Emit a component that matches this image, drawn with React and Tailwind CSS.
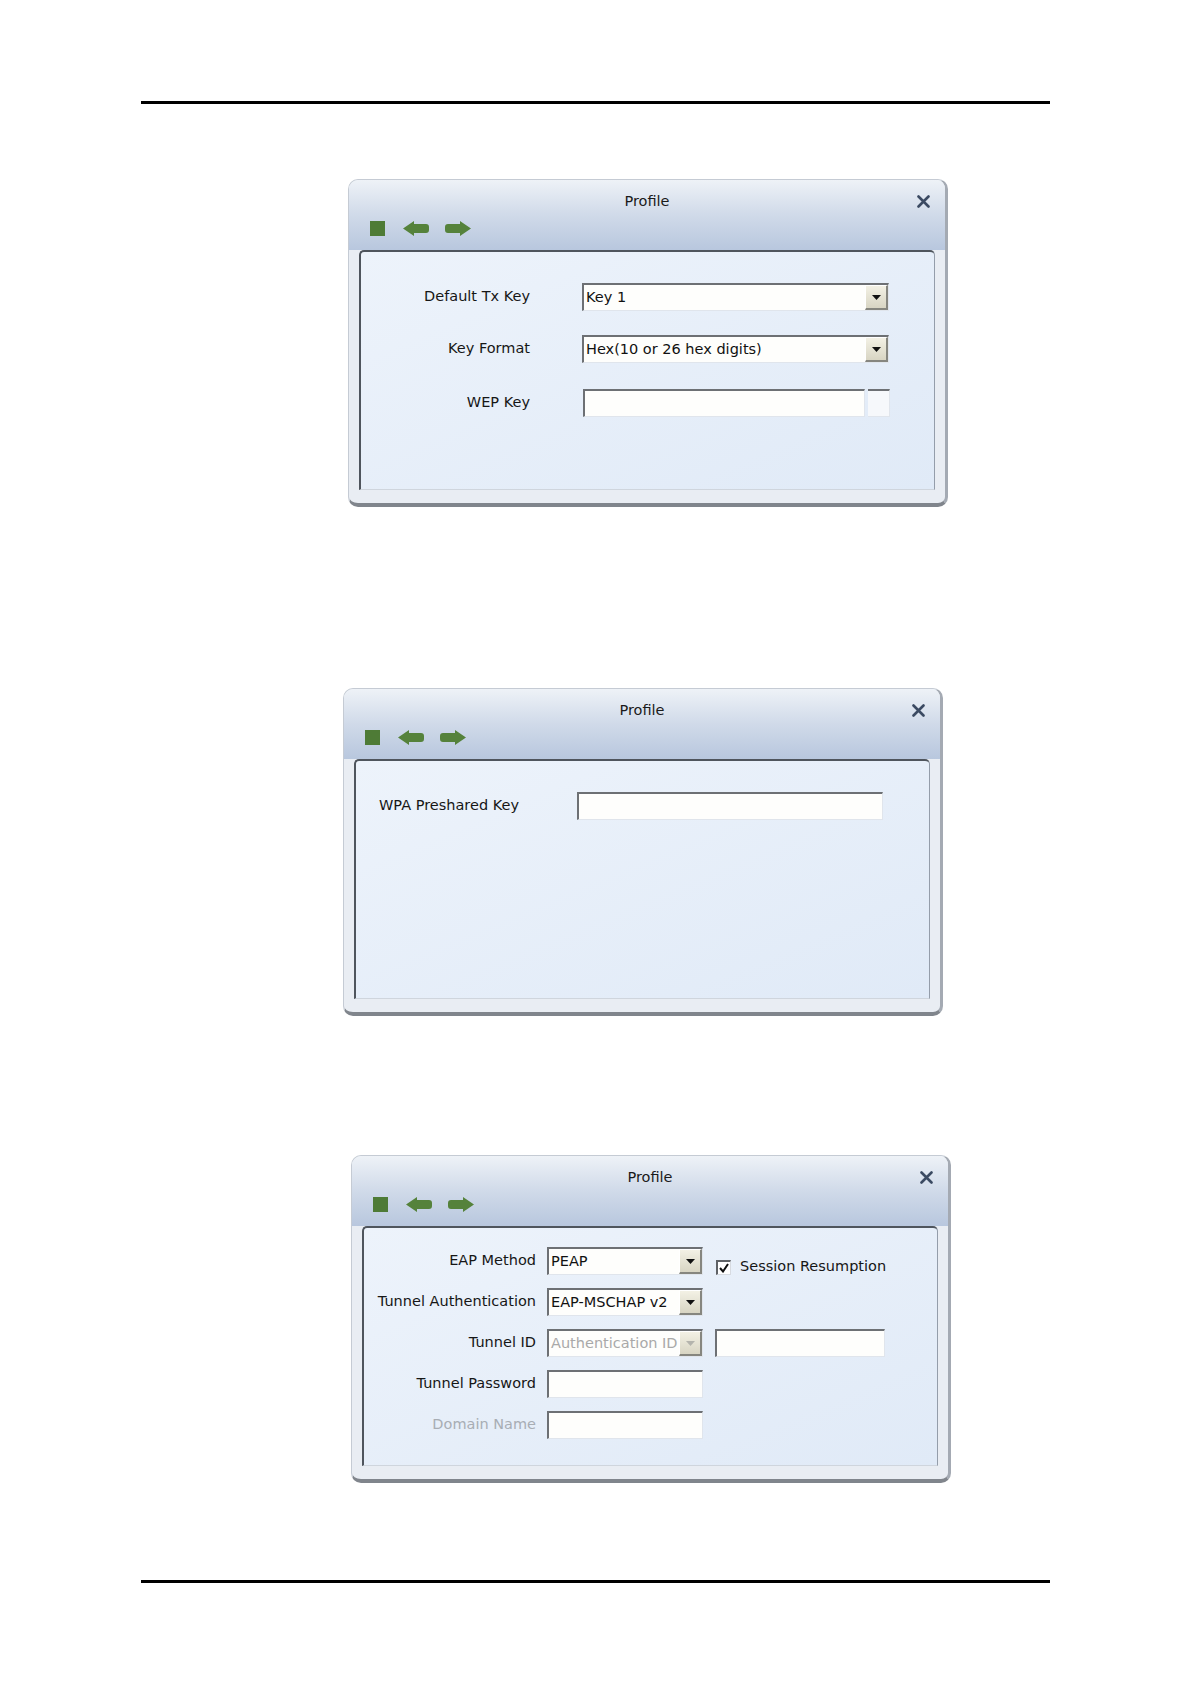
import React from 'react'

function NavIcons() {
  return (
    <div className="mt-[11px] flex h-[15px] items-center pl-[21px]">
      <svg width="15" height="15" viewBox="0 0 15 15">
        <rect x="0" y="0" width="15" height="15" fill="#4e7b36" />
      </svg>
      <svg className="ml-[18px]" width="26" height="15" viewBox="0 0 26 15">
        <path d="M0 7.5 L11 0 V3 H23 Q26 3 26 6 V9 Q26 12 23 12 H11 V15 Z" fill="#55823b" />
      </svg>
      <svg className="ml-[16px]" width="26" height="15" viewBox="0 0 26 15">
        <path d="M26 7.5 L15 0 V3 H3 Q0 3 0 6 V9 Q0 12 3 12 H15 V15 Z" fill="#55823b" />
      </svg>
    </div>
  )
}

function CloseIcon() {
  return (
    <svg width="13" height="13" viewBox="0 0 13 13">
      <path d="M1.5 1.5 L11.5 11.5 M11.5 1.5 L1.5 11.5" stroke="#3b4a62" strokeWidth="2.6" strokeLinecap="round" />
    </svg>
  )
}

function Dialog({ className, children }) {
  return (
    <div className={`flex h-[328px] w-[600px] flex-col overflow-hidden rounded-[10px] border border-[#c5cbd4] border-r-[3px] border-r-[#a4aab3] border-b-[4px] border-b-[#80858c] bg-[#e9edf3] ${className}`}>
      <div className="h-[70px] shrink-0 bg-gradient-to-b from-[#eef2f7] via-[#d0dae9] to-[#b8c7de] pt-[12px]">
        <div className="grid h-[18px] grid-cols-[1fr_auto_1fr] items-center">
          <span />
          <span className="text-[14.5px] leading-[18px] text-[#1a1a1a]">Profile</span>
          <span className="mr-[15px] flex justify-end">
            <CloseIcon />
          </span>
        </div>
        <NavIcons />
      </div>
      <div className="mx-[10px] h-[240px] shrink-0 rounded-t-[5px] border-t-2 border-l-2 border-t-[#4f555d] border-l-[#4f555d] border-r border-r-[#949daa] border-b border-b-[#cfd5dd] bg-gradient-to-br from-[#edf3fb] to-[#e0eaf7]">
        {children}
      </div>
    </div>
  )
}

function Field({ w, children }) {
  return (
    <div className={`flex h-[28px] ${w} items-center overflow-hidden border-t-2 border-l-2 border-t-[#6d7074] border-l-[#6d7074] border-r border-b border-r-[#e0e5ec] border-b-[#e0e5ec] bg-[#fefefc]`}>
      {children}
    </div>
  )
}

function DropButton({ disabled }) {
  return (
    <div className="flex h-[25px] w-[23px] shrink-0 items-center justify-center border-t border-l border-t-white border-l-white border-r-2 border-b-2 border-r-[#86867f] border-b-[#86867f] bg-gradient-to-b from-[#f3f1e5] to-[#d8d5c3]">
      <svg width="9" height="5" viewBox="0 0 9 5">
        <path d="M0 0 H9 L4.5 5 Z" fill={disabled ? '#b4b4ad' : '#111111'} />
      </svg>
    </div>
  )
}

function Select({ w, value, disabled }) {
  return (
    <Field w={w}>
      <span className={disabled ? 'min-w-0 flex-1 overflow-hidden whitespace-nowrap pl-[2px] text-[#a9a9a9]' : 'min-w-0 flex-1 overflow-hidden whitespace-nowrap pl-[2px] text-[#111]'}>
        {value}
      </span>
      <DropButton disabled={disabled} />
    </Field>
  )
}

function Checkbox() {
  return (
    <div className="flex h-[15px] w-[15px] items-center justify-center border-t-2 border-l-2 border-t-[#5f6266] border-l-[#5f6266] border-r border-b border-r-[#d7dbe1] border-b-[#d7dbe1] bg-white">
      <svg width="10" height="10" viewBox="0 0 10 10">
        <path d="M1 5 L4 8.5 L9 1" stroke="#111" strokeWidth="2" fill="none" />
      </svg>
    </div>
  )
}

function Label({ w, muted, children }) {
  return (
    <span className={`${w} shrink-0 whitespace-nowrap text-right ${muted ? 'text-[#a8adb4]' : 'text-[#161616]'}`}>
      {children}
    </span>
  )
}

export default function App() {
  return (
    <div className="h-[1684px] w-[1190px] overflow-hidden bg-white pt-[101px] font-['DejaVu_Sans',sans-serif] text-[14.5px]">
      <div className="ml-[141px] h-[3px] w-[909px] bg-black" />

      <Dialog className="ml-[348px] mt-[75px]">
        <div className="pt-[31px]">
          <div className="flex h-[28px] items-center">
            <Label w="w-[169px]">Default Tx Key</Label>
            <div className="ml-[52px]">
              <Select w="w-[307px]" value="Key 1" />
            </div>
          </div>
          <div className="mt-[24px] flex h-[28px] items-center">
            <Label w="w-[169px]">Key Format</Label>
            <div className="ml-[52px]">
              <Select w="w-[307px]" value="Hex(10 or 26 hex digits)" />
            </div>
          </div>
          <div className="mt-[26px] flex h-[28px] items-center">
            <Label w="w-[169px]">WEP Key</Label>
            <div className="ml-[53px] flex">
              <Field w="w-[282px]" />
              <div className="ml-[3px] h-[28px] w-[22px] border-t-2 border-t-[#6d7074] border-r border-b border-r-[#e0e5ec] border-b-[#e0e5ec] bg-[#f6f8fb]" />
            </div>
          </div>
        </div>
      </Dialog>

      <Dialog className="ml-[343px] mt-[181px]">
        <div className="mt-[31px] flex h-[28px] items-center pl-[23px]">
          <span className="w-[198px] shrink-0 text-[#161616]">WPA Preshared Key</span>
          <Field w="w-[306px]" />
        </div>
      </Dialog>

      <Dialog className="ml-[351px] mt-[139px]">
        <div className="flex flex-col gap-[13px] pt-[19px]">
          <div className="flex h-[28px] items-center">
            <Label w="w-[172px]">EAP Method</Label>
            <div className="ml-[11px]">
              <Select w="w-[156px]" value="PEAP" />
            </div>
            <div className="ml-[13px] mt-[12px] flex items-center">
              <Checkbox />
              <span className="ml-[9px] text-[#161616]">Session Resumption</span>
            </div>
          </div>
          <div className="flex h-[28px] items-center">
            <Label w="w-[172px]">Tunnel Authentication</Label>
            <div className="ml-[11px]">
              <Select w="w-[156px]" value="EAP-MSCHAP v2" />
            </div>
          </div>
          <div className="flex h-[28px] items-center">
            <Label w="w-[172px]">Tunnel ID</Label>
            <div className="ml-[11px]">
              <Select w="w-[156px]" value="Authentication ID" disabled />
            </div>
            <div className="ml-[12px]">
              <Field w="w-[170px]" />
            </div>
          </div>
          <div className="flex h-[28px] items-center">
            <Label w="w-[172px]">Tunnel Password</Label>
            <div className="ml-[11px]">
              <Field w="w-[156px]" />
            </div>
          </div>
          <div className="flex h-[28px] items-center">
            <Label w="w-[172px]" muted>Domain Name</Label>
            <div className="ml-[11px]">
              <Field w="w-[156px]" />
            </div>
          </div>
        </div>
      </Dialog>

      <div className="ml-[141px] mt-[97px] h-[3px] w-[909px] bg-black" />
    </div>
  )
}
